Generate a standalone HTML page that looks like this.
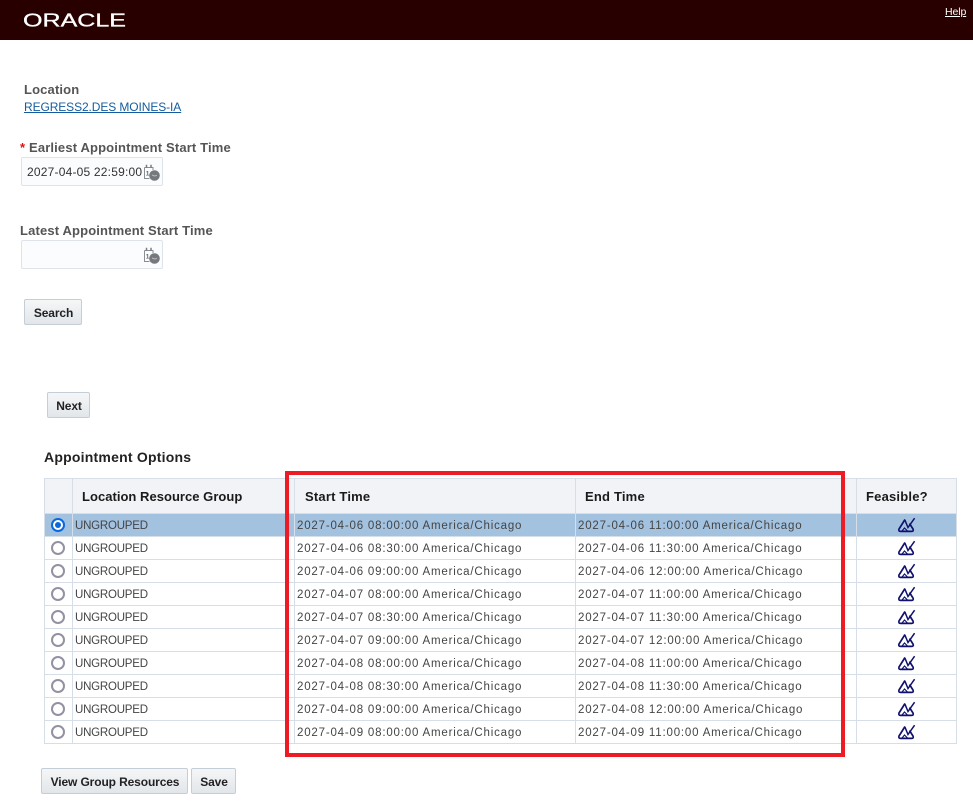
<!DOCTYPE html>
<html><head><meta charset="utf-8"><style>
html,body{margin:0;padding:0;background:#fff}
body{width:973px;height:804px;position:relative;overflow:hidden;font-family:"Liberation Sans",Arial,sans-serif}
.a{position:absolute;white-space:nowrap}
.lbl{font-weight:bold;font-size:13px;color:#555;letter-spacing:.15px;line-height:16px}
.inp{position:absolute;left:21px;width:140px;height:27px;border:1px solid #dfe4ea;border-radius:2px;background:#fbfcfe}
.btn{position:absolute;box-sizing:border-box;height:26px;border:1px solid #c4ced7;border-radius:2px;background:linear-gradient(#f5f6f7,#e2e6ea);font-weight:bold;font-size:12px;color:#222;text-align:center;line-height:26px;letter-spacing:-.12px;padding-left:1px}
table{position:absolute;left:44px;top:478px;border-collapse:collapse;table-layout:fixed;width:912px}
td,th{border:1px solid #d6dfe8;padding:0;overflow:hidden;white-space:nowrap}
th{height:35px;background:#f1f3f7;font-size:13px;font-weight:bold;color:#1a1a1a;text-align:left;padding-left:9px;letter-spacing:.2px;box-sizing:border-box}
td{height:23px;box-sizing:border-box;font-size:11.5px;color:#444;padding-left:2px;padding-top:2px;letter-spacing:-.22px}
td.d{letter-spacing:.81px;font-size:11.5px}
tr.s td{background:#a3c2df}
.r{width:10px;height:10px;border:2px solid #9292a2;border-radius:50%;margin-left:6px;background:#fff;box-sizing:content-box}
td.c{padding:0}
.r.on{border-color:#0a68dc;position:relative}
.r.on:after{content:"";position:absolute;left:2px;top:2px;width:6px;height:6px;border-radius:50%;background:#0a68dc}
svg.f{display:block;margin:0 auto}
</style></head><body>
<svg width="0" height="0" style="position:absolute"><defs>
<g id="fz" fill="none" stroke="#10106e" transform="translate(1 1)"><path d="M7 1.5 L1 11 Q.2 13.4 2.6 13.4 H13.5 Q16 13.4 15 11 L11.5 5.5" stroke-width="1.7"/><path d="M6.8 1.8 L10 9.5 L16.6 .2" stroke-width="1.5"/><path d="M4 13 L6.5 10 L9.5 13" stroke-width="1.1"/></g>
<g id="cal"><path d="M1.5 3.5 H10 V6 M1.5 3.5 V14.5 H6.5" fill="none" stroke="#8a8e93" stroke-width="1"/><path d="M3.5 .8 V4 M8 .8 V4" stroke="#7b7f84" stroke-width="1.5"/><text x="2.8" y="11.6" font-family="Liberation Sans" font-size="6.5" font-weight="bold" fill="#666">1</text><circle cx="11.5" cy="11.5" r="5.3" fill="#75797e"/><path d="M9 11 L11.5 12 L14 11.4" fill="none" stroke="#bbb" stroke-width="1"/></g>
</defs></svg>

<div class="a" style="left:0;top:0;width:973px;height:40px;background:#290000"></div>
<svg class="a" style="left:22px;top:10px" width="106" height="20"><text x="1" y="16.5" font-family="Liberation Sans" font-size="18" fill="#fff" stroke="#fff" stroke-width=".3" textLength="103" lengthAdjust="spacingAndGlyphs">ORACLE</text></svg>
<a class="a" style="left:945px;top:6px;font-size:10.5px;color:#fff;text-decoration:underline;line-height:13px;letter-spacing:-.1px">Help</a>

<div class="a lbl" style="left:24px;top:82px">Location</div>
<a class="a" style="left:24px;top:100px;font-size:12px;color:#145c9e;text-decoration:underline;line-height:14px;letter-spacing:-.1px">REGRESS2.DES MOINES-IA</a>

<div class="a" style="left:20px;top:140px;color:#e01010;font-size:13px;font-weight:bold;line-height:16px">*</div>
<div class="a lbl" style="left:29px;top:140px">Earliest Appointment Start Time</div>
<div class="inp" style="top:157px"></div>
<div class="a" style="left:27px;top:165px;font-size:12px;color:#333;line-height:15px;letter-spacing:.2px">2027-04-05 22:59:00</div>
<svg class="a" style="left:143px;top:164px" width="18" height="18"><use href="#cal"/></svg>

<div class="a lbl" style="left:20px;top:223px">Latest Appointment Start Time</div>
<div class="inp" style="top:240px"></div>
<svg class="a" style="left:143px;top:247px" width="18" height="18"><use href="#cal"/></svg>

<div class="btn" style="left:24px;top:299px;width:58px">Search</div>
<div class="btn" style="left:47px;top:392px;width:43px">Next</div>
<div class="a" style="left:44px;top:449px;font-size:14px;font-weight:bold;color:#222;line-height:16px;letter-spacing:.22px">Appointment Options</div>

<table>
<colgroup><col style="width:28px"><col style="width:222px"><col style="width:281px"><col style="width:281px"><col style="width:100px"></colgroup>
<tr><th></th><th style="letter-spacing:.03px">Location Resource Group</th><th style="padding-left:10px">Start Time</th><th>End Time</th><th>Feasible?</th></tr>
<tr class="s"><td class="c"><div class="r on"></div></td><td>UNGROUPED</td><td class="d">2027-04-06 08:00:00 America/Chicago</td><td class="d">2027-04-06 11:00:00 America/Chicago</td><td class="c"><svg class="f" width="19" height="16"><use href="#fz"/></svg></td></tr>
<tr><td class="c"><div class="r"></div></td><td>UNGROUPED</td><td class="d">2027-04-06 08:30:00 America/Chicago</td><td class="d">2027-04-06 11:30:00 America/Chicago</td><td class="c"><svg class="f" width="19" height="16"><use href="#fz"/></svg></td></tr>
<tr><td class="c"><div class="r"></div></td><td>UNGROUPED</td><td class="d">2027-04-06 09:00:00 America/Chicago</td><td class="d">2027-04-06 12:00:00 America/Chicago</td><td class="c"><svg class="f" width="19" height="16"><use href="#fz"/></svg></td></tr>
<tr><td class="c"><div class="r"></div></td><td>UNGROUPED</td><td class="d">2027-04-07 08:00:00 America/Chicago</td><td class="d">2027-04-07 11:00:00 America/Chicago</td><td class="c"><svg class="f" width="19" height="16"><use href="#fz"/></svg></td></tr>
<tr><td class="c"><div class="r"></div></td><td>UNGROUPED</td><td class="d">2027-04-07 08:30:00 America/Chicago</td><td class="d">2027-04-07 11:30:00 America/Chicago</td><td class="c"><svg class="f" width="19" height="16"><use href="#fz"/></svg></td></tr>
<tr><td class="c"><div class="r"></div></td><td>UNGROUPED</td><td class="d">2027-04-07 09:00:00 America/Chicago</td><td class="d">2027-04-07 12:00:00 America/Chicago</td><td class="c"><svg class="f" width="19" height="16"><use href="#fz"/></svg></td></tr>
<tr><td class="c"><div class="r"></div></td><td>UNGROUPED</td><td class="d">2027-04-08 08:00:00 America/Chicago</td><td class="d">2027-04-08 11:00:00 America/Chicago</td><td class="c"><svg class="f" width="19" height="16"><use href="#fz"/></svg></td></tr>
<tr><td class="c"><div class="r"></div></td><td>UNGROUPED</td><td class="d">2027-04-08 08:30:00 America/Chicago</td><td class="d">2027-04-08 11:30:00 America/Chicago</td><td class="c"><svg class="f" width="19" height="16"><use href="#fz"/></svg></td></tr>
<tr><td class="c"><div class="r"></div></td><td>UNGROUPED</td><td class="d">2027-04-08 09:00:00 America/Chicago</td><td class="d">2027-04-08 12:00:00 America/Chicago</td><td class="c"><svg class="f" width="19" height="16"><use href="#fz"/></svg></td></tr>
<tr><td class="c"><div class="r"></div></td><td>UNGROUPED</td><td class="d">2027-04-09 08:00:00 America/Chicago</td><td class="d">2027-04-09 11:00:00 America/Chicago</td><td class="c"><svg class="f" width="19" height="16"><use href="#fz"/></svg></td></tr>
</table>

<div class="a" style="left:285px;top:471px;width:552px;height:278px;border:4px solid #ed1c24"></div>

<div class="btn" style="left:41px;top:768px;width:147px">View Group Resources</div>
<div class="btn" style="left:191px;top:768px;width:45px">Save</div>
</body></html>
